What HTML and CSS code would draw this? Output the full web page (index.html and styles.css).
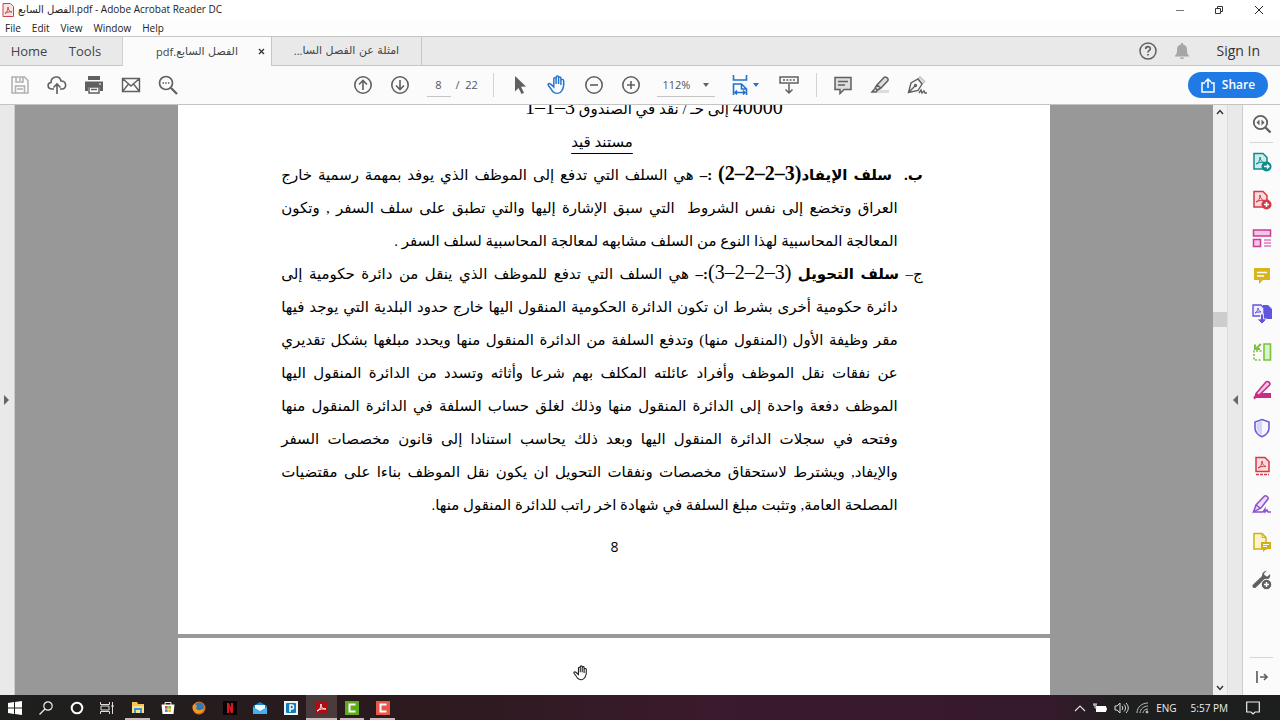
FILE: index.html
```html
<!DOCTYPE html>
<html lang="en">
<head>
<meta charset="utf-8">
<title>الفصل السابع.pdf - Adobe Acrobat Reader DC</title>
<link rel="stylesheet" href="styles.css">
</head>
<body>
<header class="titlebar">
  <svg class="app-icon" width="12" height="14" viewBox="0 0 12 14"><path d="M1 .5h7.500l3 3v10H1z" fill="#fbe3e3" stroke="#c8474c"/><path d="M3 10.500c2-1 3-4 3-6.500 0 3 1.500 4.500 4 5-2.500-.5-5 0-7 1.500z" fill="none" stroke="#c8474c"/></svg>
  <h1 class="title"><span class="ar">الفصل السابع</span>.pdf - Adobe Acrobat Reader DC</h1>
  <div class="window-buttons">
    <button aria-label="Minimize"><svg width="10" height="10" viewBox="0 0 10 10"><path d="M1 5.500h8" stroke="#777"/></svg></button>
    <button aria-label="Restore"><svg width="10" height="10" viewBox="0 0 10 10" fill="none" stroke="#333"><path d="M1.500 3.500h5v5h-5zM3.500 3V1.500h5v5H7"/></svg></button>
    <button aria-label="Close"><svg width="10" height="10" viewBox="0 0 10 10"><path d="M1 1l8 8M9 1L1 9" stroke="#222"/></svg></button>
  </div>
</header>
<nav class="menubar"><button>File</button><button>Edit</button><button>View</button><button>Window</button><button>Help</button></nav>
<nav class="tabs">
  <button class="tab-home">Home</button><button class="tab-tools">Tools</button>
  <div class="tab active"><button class="tab-name" dir="rtl"><span class="ar">الفصل السابع</span>.pdf</button><button class="tab-close" aria-label="Close tab"><svg width="7" height="7" viewBox="0 0 7 7"><path d="M1 1l5 5M6 1L1 6" stroke="#333" stroke-width="1.300"/></svg></button></div>
  <div class="tab"><button class="tab-name" dir="rtl"><span class="ar">امثلة عن الفصل السا</span>...</button></div>
  <div class="account">
    <button aria-label="Help"><svg width="20" height="20" viewBox="0 0 20 20" fill="none" stroke="#606060" stroke-width="1.500"><circle cx="10" cy="10" r="8"/><path d="M7.700 8c0-3 4.600-3 4.600-.3 0 1.700-2.300 1.600-2.300 3.800M10 13v1.600" stroke-width="1.700"/></svg></button>
    <button aria-label="Notifications"><svg width="16" height="18" viewBox="0 0 16 18" fill="#a6a6a6"><path d="M7 1h2v1.500c3 .6 4 2.500 4 5.500 0 3 .5 4.500 2 5.500v1H1v-1c1.500-1 2-2.500 2-5.500 0-3 1-4.900 4-5.500zM6 15.500h4c0 2-4 2-4 0z"/></svg></button>
    <button class="signin">Sign In</button>
  </div>
</nav>
<div class="toolbar">
  <div class="group files">
    <button aria-label="Save"><svg width="20" height="20" viewBox="0 0 20 20" fill="none" stroke="#b0b0b0" stroke-width="1.500"><path d="M2 2h12.500L18 5.500V18H2zM6 2v5h7V2M5.500 18v-7h9v7M7 14h6"/><path d="M10 3v3"/></svg></button>
    <button aria-label="Upload"><svg width="20" height="20" viewBox="0 0 20 20" fill="none" stroke="#606060" stroke-width="1.600"><path d="M7 14H5c-5 0-5-6-1-6.500C4 1 13 0 14 6c6 0 6 8 1 8h-2M10 19V9M6.500 12.500L10 9l3.500 3.500"/></svg></button>
    <button aria-label="Print"><svg width="20" height="20" viewBox="0 0 20 20"><path d="M4 1h12v4H4zM1 6.500h18V16h-3v-4H4v4H1z" fill="#606060"/><path d="M5 12h10v6H5zM7 14.500h6" fill="#fff" stroke="#606060" stroke-width="1.500"/><path d="M15 9h2" stroke="#fff"/></svg></button>
    <button aria-label="Email"><svg width="20" height="20" viewBox="0 0 20 20" fill="none" stroke="#606060" stroke-width="1.400"><path d="M1.500 3.500h17v13h-17zM1.500 3.500L10 11l8.500-7.500M1.500 16.500L7.500 9M18.500 16.500L12.500 9"/></svg></button>
    <button aria-label="Find"><svg width="20" height="20" viewBox="0 0 20 20" fill="none" stroke="#606060" stroke-width="1.700"><circle cx="8" cy="8" r="6.500"/><path d="M13 13l6 6" stroke-width="2.300"/><path d="M4.500 8h7" stroke-dasharray="1.500 1.200"/></svg></button>
  </div>
  <div class="group">
    <button aria-label="Previous page"><svg width="20" height="20" viewBox="0 0 20 20" fill="none" stroke="#606060" stroke-width="1.600"><circle cx="10" cy="10" r="8.200"/><path d="M10 15V5.500M6 9.500l4-4 4 4"/></svg></button>
    <button aria-label="Next page"><svg width="20" height="20" viewBox="0 0 20 20" fill="none" stroke="#606060" stroke-width="1.600"><circle cx="10" cy="10" r="8.200"/><path d="M10 5v9.500M6 10.500l4 4 4-4"/></svg></button>
    <input class="page-input" type="text" value="8" aria-label="Page"><span class="page-total">/&nbsp; 22</span>
    <span class="divider"></span>
    <button aria-label="Select"><svg width="20" height="20" viewBox="0 0 20 20"><path d="M5 1l11 10.500-5 .3 3 6-2.500 1.200-3-6L5 16.500z" fill="#606060"/></svg></button>
    <button aria-label="Hand"><svg width="20" height="20" viewBox="0 0 22 22" fill="none" stroke="#2472d0" stroke-width="1.600"><path d="M7.500 11V4.200c0-1.600 2.500-1.600 2.500 0V10 2.500c0-1.800 2.700-1.800 2.700 0V10 3.500c0-1.700 2.600-1.700 2.600 0V11 6c0-1.600 3-1.600 3 0 .4 4 0 8-1.800 11-2 4-7.500 4-10 1.500C5 16 3 13.500 1.500 11.500c-1-1.700 1-2.800 2.500-1.500l3.500 3z"/></svg></button>
    <button aria-label="Zoom out"><svg width="20" height="20" viewBox="0 0 20 20" fill="none" stroke="#606060" stroke-width="1.600"><circle cx="10" cy="10" r="8.200"/><path d="M6 10h8"/></svg></button>
    <button aria-label="Zoom in"><svg width="20" height="20" viewBox="0 0 20 20" fill="none" stroke="#606060" stroke-width="1.600"><circle cx="10" cy="10" r="8.200"/><path d="M6 10h8M10 6v8"/></svg></button>
    <span class="zoom-box"><select aria-label="Zoom level"><option>112%</option></select><svg width="6" height="4" viewBox="0 0 6 4"><path d="M0 0h6L3 4z" fill="#606060"/></svg></span>
    <button class="fit" aria-label="Fit width"><svg width="16" height="22" viewBox="0 0 16 22" fill="none" stroke="#2472d0" stroke-width="1.600"><path d="M1.500 1v5h13V1M1.500 21V10h8l5 5v6M9.500 10v5h5M3 18.500h10M5 16.500l-2 2 2 2M11 16.500l2 2-2 2"/></svg><svg width="6" height="4" viewBox="0 0 6 4"><path d="M0 0h6L3 4z" fill="#2472d0"/></svg></button>
    <button class="read" aria-label="Read mode"><svg width="20" height="20" viewBox="0 0 20 20" fill="none" stroke="#606060" stroke-width="1.500"><path d="M1 2h18v6H1zM10 9v9M6.500 14.500L10 18l3.500-3.500"/><path d="M4 5h12" stroke-dasharray="2 1.300"/></svg></button>
    <span class="divider"></span>
    <button aria-label="Comment"><svg width="20" height="20" viewBox="0 0 20 20" fill="#ddd" stroke="#606060" stroke-width="1.500"><path d="M2 2.500h16v12h-7l-4 4v-4H2zM5 6.500h10M5 10h7"/></svg></button>
    <button aria-label="Highlight"><svg width="20" height="20" viewBox="0 0 20 20" fill="#ddd"><path d="M8 15h11v3H5z"/><path d="M14 2.500c1.500-1.500 5 1 4 3L11 13l-4-3zM7 10l-2 3 2.500 2L11 13M4.500 14L2 17h4l1.500-2" stroke="#606060" stroke-width="1.500"/></svg></button>
    <button aria-label="Sign"><svg width="20" height="20" viewBox="0 0 20 20" fill="none" stroke="#606060" stroke-width="1.400"><path d="M11 4l2-2.500 5 5L15 9z" fill="#ddd" stroke="#aaa" stroke-width="1"/><path d="M1.500 17.500L4 8l7-4 4 5-4 6.500zM1.500 17.500L8 11"/><circle cx="8.500" cy="10.500" r="1"/><path d="M12 18l2-3 1 3 2-2 1 2h2"/></svg></button>
  </div>
  <button class="share"><svg width="14" height="15" viewBox="0 0 14 15" fill="none" stroke="#fff" stroke-width="1.500"><path d="M4 5H1v9h12V5h-3M7 10V1M4 4l3-3 3 3"/></svg>Share</button>
</div>
<main class="workspace">
  <button class="rail left" aria-label="Open navigation pane"><svg width="6" height="10" viewBox="0 0 6 10"><path d="M0 0v10l5-5z" fill="#666"/></svg></button>
  <section class="canvas">
    <article class="page first" lang="ar" dir="rtl">
      <p class="line entry"><bdi class="num" dir="ltr">40000</bdi> إلى حـ / نقد في الصندوق <bdi class="num" dir="ltr">1–1–3</bdi></p>
      <p class="line caption"><u>مستند قيد</u></p>
      <p class="line full hang"><b>ب.&nbsp; سلف الإيفاد<bdi class="num" dir="ltr">(2–2–2–3)</bdi> :–</b> هي السلف التي تدفع إلى الموظف الذي يوفد بمهمة رسمية خارج</p>
      <p class="line full">العراق وتخضع إلى نفس الشروط&nbsp; التي سبق الإشارة إليها والتي تطبق على سلف السفر , وتكون</p>
      <p class="line">المعالجة المحاسبية لهذا النوع من السلف مشابهه لمعالجة المحاسبية لسلف السفر .</p>
      <p class="line full hang">ج– <b>سلف التحويل</b> <bdi class="num" dir="ltr">(3–2–2–3)</bdi><b>:–</b> هي السلف التي تدفع للموظف الذي ينقل من دائرة حكومية إلى</p>
      <p class="line full">دائرة حكومية أخرى بشرط ان تكون الدائرة الحكومية المنقول اليها خارج حدود البلدية التي يوجد فيها</p>
      <p class="line full">مقر وظيفة الأول (المنقول منها) وتدفع السلفة من الدائرة المنقول منها ويحدد مبلغها بشكل تقديري</p>
      <p class="line full">عن نفقات نقل الموظف وأفراد عائلته المكلف بهم شرعا وأثاثه وتسدد من الدائرة المنقول اليها</p>
      <p class="line full">الموظف دفعة واحدة إلى الدائرة المنقول منها وذلك لغلق حساب السلفة في الدائرة المنقول منها</p>
      <p class="line full">وفتحه في سجلات الدائرة المنقول اليها وبعد ذلك يحاسب استنادا إلى قانون مخصصات السفر</p>
      <p class="line full">والإيفاد, ويشترط لاستحقاق مخصصات ونفقات التحويل ان يكون نقل الموظف بناءا على مقتضيات</p>
      <p class="line">المصلحة العامة, وتثبت مبلغ السلفة في شهادة اخر راتب للدائرة المنقول منها.</p>
      <footer class="folio">8</footer>
    </article>
    <article class="page next"></article>
    <svg class="cursor" width="16" height="16" viewBox="0 0 22 22" fill="#fff" stroke="#222" stroke-width="1.500"><path d="M7.500 11V4.200c0-1.600 2.500-1.600 2.500 0V10 2.500c0-1.800 2.700-1.800 2.700 0V10 3.500c0-1.700 2.600-1.700 2.600 0V11 6c0-1.600 3-1.600 3 0 .4 4 0 8-1.800 11-2 4-7.500 4-10 1.500C5 16 3 13.500 1.500 11.500c-1-1.700 1-2.800 2.500-1.500l3.500 3z"/></svg>
  </section>
  <div class="scrollbar">
    <button aria-label="Scroll up"><svg width="8" height="6" viewBox="0 0 8 6"><path d="M1 5l3-3.500L7 5" fill="none" stroke="#333" stroke-width="1.400"/></svg></button>
    <div class="track"><div class="thumb"></div></div>
    <button aria-label="Scroll down"><svg width="8" height="6" viewBox="0 0 8 6"><path d="M1 1l3 3.500L7 1" fill="none" stroke="#333" stroke-width="1.400"/></svg></button>
  </div>
  <button class="rail right" aria-label="Close tools pane"><svg width="6" height="10" viewBox="0 0 6 10"><path d="M6 0v10L1 5z" fill="#666"/></svg></button>
  <aside class="tools">
    <button class="ruled" aria-label="Search tools"><svg width="20" height="20" viewBox="0 0 20 20" fill="none" stroke="#606060" stroke-width="1.800"><circle cx="8.500" cy="8.500" r="6.700"/><path d="M13.500 13.500l5 5" stroke-width="2.400"/><path d="M7.500 5.500v6l-3-3zM9.500 5.500v6l3-3z" fill="#606060" stroke="none"/></svg></button>
    <button aria-label="Export PDF"><svg width="20" height="20" viewBox="0 0 20 20"><path d="M2 1.500h9l4 4V17H2z" fill="#cdebea" stroke="#108a8c" stroke-width="1.500"/><path d="M4 12c3-1 4-4 4-7 0 3 2 5 4 5.500-3-.5-5 0-8 1.500z" fill="none" stroke="#108a8c"/><circle cx="14.500" cy="14.500" r="5" fill="#108a8c"/><path d="M12 14.500h5M15 12.500l2 2-2 2" fill="none" stroke="#fff" stroke-width="1.400"/></svg></button>
    <button aria-label="Create PDF"><svg width="20" height="20" viewBox="0 0 20 20"><path d="M2 1.500h9l4 4V17H2z" fill="#fadadd" stroke="#d43a48" stroke-width="1.500"/><path d="M4 12c3-1 4-4 4-7 0 3 2 5 4 5.500-3-.5-5 0-8 1.500z" fill="none" stroke="#d43a48"/><circle cx="14.500" cy="14.500" r="5" fill="#d43a48"/><path d="M12 14.500h5M14.500 12v5" stroke="#fff" stroke-width="1.500"/></svg></button>
    <button aria-label="Organize pages"><svg width="20" height="20" viewBox="0 0 20 20" fill="#f7c5e3" stroke="#c93c97" stroke-width="1.500"><path d="M1.500 2h17v6h-17zM1.500 11.500h7v7h-7z"/><path d="M12 12h7M12 15h7M12 18h7" stroke-width="1"/></svg></button>
    <button aria-label="Comment"><svg width="20" height="20" viewBox="0 0 20 20"><path d="M2 2h16v12h-7l-4 4v-4H2z" fill="#d8b51c"/><path d="M5 6.500h10M5 10h7" stroke="#fff" stroke-width="1.500"/></svg></button>
    <button aria-label="Combine files"><svg width="22" height="22" viewBox="0 0 22 22"><path d="M12 2h5l4 4v10h-9z" fill="#6056dc"/><path d="M2 2h8l3 3v8H2z" fill="#eeeaff" stroke="#6056dc" stroke-width="1.400"/><path d="M4 10c2-1 3-3 3-5 0 2 1 3 3 4-2 0-4 0-6 1z" fill="none" stroke="#6056dc"/><path d="M9.500 11h3v5h3.500l-5 5-5-5h3.500z" fill="#6056dc" stroke="#fff" stroke-width=".8"/></svg></button>
    <button aria-label="Crop"><svg width="20" height="20" viewBox="0 0 20 20" fill="none" stroke="#78c340" stroke-width="1.600"><path d="M12 2h6.500v16H12z" fill="#d9f3c7"/><path d="M9.500 9H2v9h8" stroke-dasharray="2 1.500"/><path d="M9 2L3.500 7M3 2.500V7h5" stroke-width="2"/></svg></button>
    <button aria-label="Redact"><svg width="20" height="20" viewBox="0 0 20 20"><path d="M9 13h10v5H6z" fill="#c72d86"/><path d="M14 2c1.500-1.500 5 1 3.500 3L8 14.500 3 18l1-4.500z" fill="#f7c5e3" stroke="#c72d86" stroke-width="1.600"/><path d="M1 18l4-5 4 4-2 1z" fill="#c72d86"/></svg></button>
    <button aria-label="Protect"><svg width="20" height="20" viewBox="0 0 20 20"><path d="M10 1.500l7 2.500v6c0 4-3 7-7 8.700C6 17 3 14 3 10V4z" fill="#f8f7ff" stroke="#6a60d5" stroke-width="1.600"/><path d="M10 3l-5.500 2v5c0 3.500 2.500 5.500 5.500 7z" fill="#d4d4fb"/></svg></button>
    <button aria-label="Optimize"><svg width="20" height="20" viewBox="0 0 20 20" fill="none" stroke="#d43a48" stroke-width="1.500"><path d="M4 1.500h9l4 4v10H4z" fill="#fadadd"/><path d="M6 12c3-1 4-4 4-7 0 3 2 5 4 5.500-3-.5-5 0-8 1.500z" stroke-width="1"/><path d="M4 18.500h13" stroke-dasharray="3 1"/></svg></button>
    <button aria-label="Fill and sign"><svg width="20" height="20" viewBox="0 0 20 20" fill="none" stroke="#8b52cf" stroke-width="1.500"><path d="M12 2.500c1.500-2 5 .5 4 2.500L9 14l-7.500 4L4 11z" fill="#ebdcfb"/><path d="M2 18h9l2-3v3l2-2 1 2h3M4 11l4 3"/></svg></button>
    <button aria-label="Send for comments"><svg width="20" height="20" viewBox="0 0 20 20"><path d="M2 1.500h8l4 4V17H2z" fill="#fbf4c8" stroke="#d1ae15" stroke-width="1.500"/><path d="M10 1.500v4h4" fill="none" stroke="#d1ae15"/><path d="M9 10h10v7h-5l-3 3v-3H9z" fill="#d1ae15"/><path d="M11 12.500h6M11 14.500h4" stroke="#fff"/></svg></button>
    <button aria-label="More tools"><svg width="20" height="20" viewBox="0 0 20 20"><path d="M2.500 16L12 7" stroke="#606060" stroke-width="4" stroke-linecap="round"/><path d="M15 .5l-3 3 .5 2.500 3 .5L18 4c1 4-2 6-5 5.500-4-1-4.500-8 2-9z" fill="#606060"/><circle cx="14.500" cy="14.500" r="5.200" fill="#606060" stroke="#fbfbfb"/><path d="M12 14.500h5M14.500 12v5" stroke="#fff" stroke-width="1.500"/></svg></button>
    <button class="collapse" aria-label="Collapse"><svg width="14" height="14" viewBox="0 0 14 14" fill="none" stroke="#606060" stroke-width="1.700"><path d="M2 1v12M5 7h7M9 4l3 3-3 3"/></svg></button>
  </aside>
</main>
<footer class="taskbar">
  <div class="apps">
    <button aria-label="Start"><svg width="14" height="14" viewBox="0 0 14 14"><path d="M0 2l6-1v5.500H0zM7 1l7-1v6.500H7zM0 7.500h6V13l-6-1zM7 7.500h7V14l-7-1z" fill="#fff"/></svg></button>
    <button aria-label="Search"><svg width="14" height="14" viewBox="0 0 14 14" fill="none" stroke="#eee" stroke-width="1.200"><circle cx="9" cy="5" r="4.200"/><path d="M6 8l-5.500 5.500"/></svg></button>
    <button aria-label="Cortana"><svg width="14" height="14" viewBox="0 0 14 14"><circle cx="7" cy="7" r="5.300" fill="none" stroke="#fff" stroke-width="2"/></svg></button>
    <button aria-label="Task view"><svg width="14" height="14" viewBox="0 0 14 14" fill="none" stroke="#ddd"><path d="M.5 1v2.500h9V1M.5 13v-2.500h9V13M1 5h8v4H1zM12.500 1v12M11 5h3"/></svg></button>
    <button class="open" aria-label="File Explorer"><svg width="14" height="13" viewBox="0 0 14 13"><path d="M1 1h5l1 2h6v9H1z" fill="#f4c64f"/><path d="M1 5h12v7H1z" fill="#ffe18a"/><path d="M3 7h8v5H9V9H5v3H3z" fill="#3a96d8"/></svg></button>
    <button aria-label="Store"><svg width="14" height="14" viewBox="0 0 14 14"><path d="M4 4V1.500h6V4" fill="none" stroke="#eee"/><path d="M.5 3.500h13L12.500 13h-11z" fill="#fff"/><path d="M4 5h2.700v2.700H4z" fill="#e84a27"/><path d="M7.300 5H10v2.700H7.300z" fill="#7db928"/><path d="M4 8.300h2.700V11H4z" fill="#28a0e0"/><path d="M7.300 8.300H10V11H7.300z" fill="#f6b21a"/></svg></button>
    <button aria-label="Firefox"><svg width="14" height="14" viewBox="0 0 14 14"><circle cx="7" cy="7" r="6.500" fill="#e7681b"/><circle cx="7.500" cy="5.700" r="4.300" fill="#2e79b9"/><path d="M1 4c2-1 3 0 4 1L4 7c1 3 5 3 8 0-1 5-5 6-8 5C1 10 0 7 1 4z" fill="#ef9a22"/></svg></button>
    <button aria-label="Netflix"><svg width="14" height="14" viewBox="0 0 14 14"><path d="M0 0h14v14H0z" fill="#080405"/><path d="M5 12V2l4 10V2" fill="none" stroke="#d71920" stroke-width="2"/></svg></button>
    <button aria-label="Mail"><svg width="14" height="14" viewBox="0 0 14 14"><path d="M0 5l7-4 7 4v8H0z" fill="#1684d5"/><path d="M2 4h10v4l-5 3-5-3z" fill="#f4f9ff"/><path d="M0 6l7 4 7-4v7H0z" fill="#45b0ef"/></svg></button>
    <button aria-label="Publisher"><svg width="14" height="14" viewBox="0 0 14 14"><path d="M0 0h14v14H0z" fill="#e8f4fc"/><rect x="2" y="2" width="10" height="10" rx="1" fill="#1779b9"/><path d="M6 11V4h2c2 0 2 4 0 4H6" fill="none" stroke="#fff" stroke-width="1.500"/></svg></button>
    <button class="open current" aria-label="Acrobat Reader"><svg width="13" height="13" viewBox="0 0 13 13"><path d="M0 0h13v13H0z" fill="#b30b12"/><path d="M2 10c3-1 4-4 4-7 0 4 2 5 5 5-4-.5-6 0-9 2z" fill="none" stroke="#fff"/></svg></button>
    <button class="open" aria-label="Camtasia"><svg width="14" height="14" viewBox="0 0 14 14"><path d="M0 0h14v14H0z" fill="#5eaa19"/><path d="M10.500 3.500h-6v7h6" fill="none" stroke="#fff" stroke-width="2"/></svg></button>
    <button class="open" aria-label="Recorder"><svg width="14" height="14" viewBox="0 0 14 14"><path d="M0 0h14v14H0z" fill="#e9574a"/><path d="M10.500 3.500h-6v7h6" fill="none" stroke="#fff" stroke-width="2"/></svg></button>
  </div>
  <div class="tray">
    <svg width="12" height="8" viewBox="0 0 12 8"><path d="M1 7l5-5 5 5" fill="none" stroke="#ddd" stroke-width="1.200"/></svg>
    <svg width="14" height="10" viewBox="0 0 14 10"><path d="M3 3h10v6H3z" fill="#fff"/><path d="M13.500 4.500v3M0 2h4M1 0v2M3 0v2M2 2v3h2" fill="none" stroke="#ddd"/></svg>
    <svg width="15" height="12" viewBox="0 0 15 12" fill="none" stroke="#ddd"><path d="M1 4h2l3-3v10L3 8H1zM8 4c1 1 1 3 0 4M10 2.500c2 2 2 5 0 7M12 1c3 3 3 7 0 10"/></svg>
    <svg width="13" height="12" viewBox="0 0 13 12" fill="none" stroke="#bbb"><path d="M1 11C1 5 6 1 12 1M4 11c0-4 4-7 8-7M7 11c0-2 2-4 5-4"/><circle cx="11" cy="10" r="1" fill="#fff"/></svg>
    <span class="lang">ENG</span><time class="clock">5:57 PM</time>
    <svg width="14" height="14" viewBox="0 0 14 14"><path d="M.7 1h12.600v10H9l-2 2-2-2H.7z" fill="none" stroke="#eee" stroke-width="1.200"/></svg>
  </div>
</footer>
</body>
</html>
```
FILE: styles.css
```css
* { box-sizing: border-box; }
body {
  margin: 0; height: 100vh; display: flex; flex-direction: column; overflow: hidden;
  font-family: "Open Sans", "DejaVu Sans", sans-serif; font-size: 11px; line-height: 18px; color: #222; background: #fbfbfb;
}
button, input, select { font: inherit; color: inherit; border: 0; padding: 0; margin: 0; background: none; }
button { display: flex; align-items: center; justify-content: center; flex: none; white-space: nowrap; }
svg { display: block; flex: none; }
h1, p { margin: 0; }
.ar { font-family: "DejaVu Sans", sans-serif; font-size: 10px; }

.titlebar { display: flex; align-items: center; height: 19px; flex: none; background: #fff; padding-left: 2px; }
.title { font-size: 10px; font-weight: 400; margin-left: 4px; }
.window-buttons { display: flex; margin-left: auto; }
.window-buttons button { width: 39px; height: 18px; }
.window-buttons button:last-child { width: 42px; }
.menubar { display: flex; gap: 11px; padding-left: 5px; height: 17px; flex: none; background: #fdfdfd; font-size: 10px; }

.tabs { display: flex; height: 30px; flex: none; background: #e9e9e9; border-top: 1px solid #c6c6c6; border-bottom: 1px solid #c6c6c6; }
.tab-home, .tab-tools { font-size: 13px; color: #444; }
.tab-home { width: 58px; }
.tab-tools { width: 54px; margin-right: 10px; }
.tab { display: flex; align-items: center; width: 150px; border-right: 1px solid #c6c6c6; }
.tab-name { flex: 1; color: #444; }
.tab-name .ar { font-size: 11px; }
.tab.active { background: #fbfbfb; margin-bottom: -1px; border-left: 1px solid #d0d0d0; }
.active .tab-name { padding-left: 20px; }
.tab-close { width: 20px; }
.account { display: flex; align-items: center; margin-left: auto; padding-right: 20px; gap: 16px; }
.signin { font-size: 14px; margin-left: 10px; color: #333; }

.toolbar { display: grid; grid-template-columns: 1fr auto 1fr; align-items: center; height: 39px; flex: none; padding: 0 12px; border-bottom: 1px solid #c4c4c4; background: #fbfbfb; }
.group { display: flex; align-items: center; color: #555; }
.files { margin-left: -10px; }
.group button { width: 36px; height: 30px; margin-right: 1px; }
.page-input { width: 24px; height: 24px; margin-left: 8px; border-bottom: 1px solid #c4c4c4; text-align: center; }
.page-total { margin-left: 5px; width: 32px; }
.divider { width: 1px; height: 24px; background: #d2d2d2; margin: 0 8px 0 5px; }
.zoom-box { display: flex; align-items: center; width: 58px; height: 24px; margin: 0 17px 0 7px; border-bottom: 1px solid #c4c4c4; }
.zoom-box select { appearance: none; flex: 1; padding-left: 6px; }
.zoom-box svg { margin-right: 6px; }
.group .fit { width: 28px; gap: 5px; margin-right: 11px; }
.group .read { margin-right: 4px; }
.share { justify-self: end; width: 80px; height: 26px; gap: 7px; border-radius: 13px; background: #1f7ae5; color: #fff; font-size: 12px; font-weight: 600; }

.workspace { display: flex; flex: 1; min-height: 0; }
.rail { width: 15px; background: #e9e9e9; }
.rail.left { border-right: 1px solid #ccc; }
.rail.right { border-left: 1px solid #ddd; }
.canvas { position: relative; flex: 1; min-width: 0; background: #989898; overflow: hidden; display: flex; flex-direction: column; align-items: center; gap: 4px; }
.page { width: 72.75%; background: #fff; flex: none; }
.first { margin-top: -12px; padding: 0 152px 71px 103px; color: #000; font-family: "Liberation Serif", "DejaVu Sans", serif; font-size: 15px; line-height: 33px; }
.next { flex: 1; }
.line { white-space: nowrap; height: 33px; }
.full { text-align-last: justify; }
.hang, .caption { margin-right: -25px; }
.entry { padding-right: 115px; word-spacing: normal; }
.caption { text-align: center; }
.caption u { text-underline-offset: 6px; }
.num { font-size: 20px; line-height: 20px; }
.folio { margin: 8px -25px 0 0; padding-left: 25px; text-align: center; font-family: "Open Sans", sans-serif; font-size: 14px; }
.cursor { position: absolute; left: 558px; top: 560px; }

.scrollbar { display: flex; flex-direction: column; width: 14px; background: #f0f0f0; flex: none; }
.scrollbar button { height: 14px; }
.track { flex: 1; padding-top: 193px; }
.thumb { height: 15px; background: #cdcdcd; }
.tools { display: flex; flex-direction: column; width: 38px; flex: none; border-left: 1px solid #ccc; background: #fbfbfb; }
.tools button { height: 38px; margin: 0 7px; }
.tools .ruled { border-bottom: 1px solid #d5d5d5; }
.tools .collapse { margin-top: auto; border-top: 1px solid #d5d5d5; }

.taskbar { display: flex; justify-content: space-between; height: 25px; flex: none; color: #eee; background: linear-gradient(90deg, #1d201d, #2b1a1d 30%, #3a1a2c 55%, #351a2c 82%, #1c1f1d 88%); }
.apps { display: grid; grid-template-columns: repeat(13, 1fr); width: 398px; }
.open { border-bottom: 2px solid #c9b9bd; background-clip: padding-box; margin: 0 3px; padding-top: 2px; }
.current { background-color: #4a3b3d; margin: 0; }
.tray { display: flex; align-items: center; gap: 7px; padding-right: 20px; font-size: 10px; }
.clock { margin: 0 11px 0 7px; }
```
